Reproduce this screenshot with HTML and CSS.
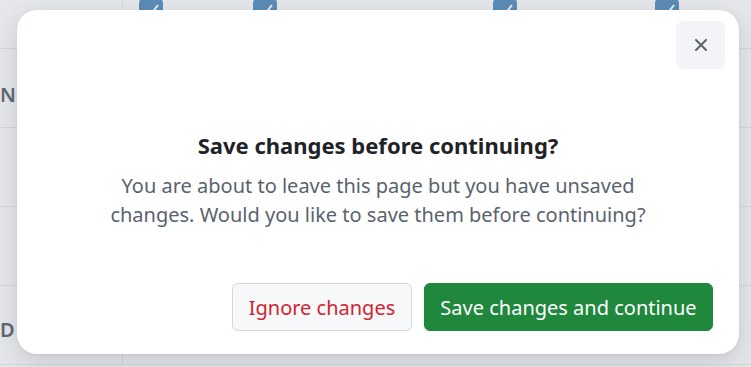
FILE: index.html
```html
<!DOCTYPE html>
<html lang="en">
<head>
<meta charset="utf-8">
<title>Save changes</title>
<link rel="stylesheet" href="styles.css">
</head>
<body>
<div class="page">
  <div class="table">
    <div class="row head">
      <div class="cell first"></div>
      <div class="cell">
        <span class="check c1"><svg width="24" height="20" viewBox="0 0 24 20"><path d="M9 13 L12 16 L19 7" fill="none" stroke="#e9eef4" stroke-width="2"/></svg></span>
        <span class="check c2"><svg width="24" height="20" viewBox="0 0 24 20"><path d="M9 13 L12 16 L19 7" fill="none" stroke="#e9eef4" stroke-width="2"/></svg></span>
        <span class="check c3"><svg width="24" height="20" viewBox="0 0 24 20"><path d="M9 13 L12 16 L19 7" fill="none" stroke="#e9eef4" stroke-width="2"/></svg></span>
        <span class="check c4"><svg width="24" height="20" viewBox="0 0 24 20"><path d="M9 13 L12 16 L19 7" fill="none" stroke="#e9eef4" stroke-width="2"/></svg></span>
      </div>
    </div>
    <div class="row"><div class="cell first"><span class="letter l1">N</span></div><div class="cell"></div></div>
    <div class="row"><div class="cell first"></div><div class="cell"></div></div>
    <div class="row"><div class="cell first"></div><div class="cell"></div></div>
    <div class="row"><div class="cell first"><span class="letter l2">D</span></div><div class="cell"></div></div>
  </div>

  <div class="modal" role="dialog" aria-labelledby="dlg-title">
    <div class="modal-header">
      <button class="close" aria-label="Close">
        <svg width="12" height="12" viewBox="0 0 12 12"><path d="M1 1 L11 11 M11 1 L1 11" stroke="#59636e" stroke-width="2" stroke-linecap="round"/></svg>
      </button>
    </div>
    <div class="modal-body">
      <h2 id="dlg-title" class="title">Save changes before continuing?</h2>
      <p class="text">You are about to leave this page but you have unsaved changes. Would you like to save them before continuing?</p>
    </div>
    <div class="modal-footer">
      <button class="btn btn-ignore">Ignore changes</button>
      <button class="btn btn-save">Save changes and continue</button>
    </div>
  </div>
</div>
</body>
</html>
```

FILE: styles.css
```css
* { box-sizing: border-box; }
html, body { margin: 0; padding: 0; }
body {
  width: 751px;
  height: 367px;
  overflow: hidden;
  background: #e5e7ea;
  font-family: "Noto Sans", "Open Sans", sans-serif;
}
.page { position: relative; width: 751px; height: 367px; }

.table { display: flex; flex-direction: column; }
.row { display: flex; height: 79px; border-bottom: 1px solid #d3d7dc; }
.row.head { height: 49px; }
.cell { flex: 1; position: relative; }
.cell.first { flex: 0 0 123px; border-right: 1px solid #d3d7dc; overflow: hidden; }
.check {
  position: absolute; top: -2px; width: 24px; height: 20px;
  background: #5b8cb6; border-radius: 5px; overflow: hidden;
}
.check svg { display: block; }
.c1 { left: 16px; } .c2 { left: 130px; } .c3 { left: 370px; } .c4 { left: 532px; }
.letter {
  position: absolute; left: 0; font-size: 20px; font-weight: 600; color: #5f6670;
}
.l1 { top: 32px; }
.l2 { top: 30px; }

.modal {
  position: absolute;
  left: 17px; top: 10px;
  width: 722px; height: 344px;
  background: #fff;
  border-radius: 20px;
  box-shadow: 0 8px 24px rgba(60, 70, 85, 0.18), 0 1px 3px rgba(60,70,85,0.08);
  display: flex; flex-direction: column;
}
.modal-header { display: flex; justify-content: flex-end; padding: 11px 14px 0 0; }
.close {
  width: 49px; height: 48px; border: none; border-radius: 8px;
  background: #f3f4f7; display: flex; align-items: center; justify-content: center;
  padding: 0; margin: 0;
}
.modal-body { flex: 1; text-align: center; padding-top: 61px; }
.title {
  margin: 0; font-size: 22px; font-weight: 700; color: #1f2328; line-height: 30px;
}
.text {
  margin: 11px auto 0; max-width: 560px; font-size: 20px; line-height: 29px; color: #59636e;
}
.modal-footer { display: flex; justify-content: flex-end; gap: 12px; padding: 0 26px 23px 0; }
.btn {
  height: 48px; border-radius: 6px; font-family: inherit; font-size: 20px;
  padding: 0 10px; cursor: pointer;
}
.btn-ignore { background: #f6f8fa; border: 1px solid #d1d9e0; color: #d1242f; width: 180px; }
.btn-save { background: #1f883d; border: 1px solid #1f883d; color: #fff; width: 289px; }
```
